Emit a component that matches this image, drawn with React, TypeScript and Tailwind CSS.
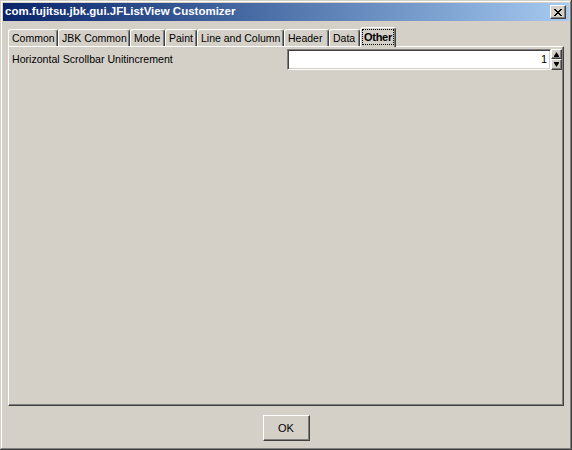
import React from "react";

const tabs: { label: string; w: string; selected?: boolean }[] = [
  { label: "Common", w: "w-[50px]" },
  { label: "JBK Common", w: "w-[72px]" },
  { label: "Mode", w: "w-[35px]" },
  { label: "Paint", w: "w-[32px]" },
  { label: "Line and Column", w: "w-[87px]" },
  { label: "Header", w: "w-[45px]" },
  { label: "Data", w: "w-[31px]" },
  { label: "Other", w: "w-[36px]", selected: true },
];

function Raised({ className = "", children }: { className?: string; children?: React.ReactNode }) {
  return (
    <div
      className={
        "bg-[#d4d0c8] border border-t-white border-l-white border-r-[#404040] border-b-[#404040] shadow-[inset_-1px_-1px_0_#808080] flex items-center justify-center " +
        className
      }
    >
      {children}
    </div>
  );
}

export default function App() {
  return (
    <div className="w-[572px] h-[450px] bg-[#d4d0c8] p-[3px] flex flex-col font-['Liberation_Sans',Arial,sans-serif] text-black shadow-[inset_-1px_-1px_0_#404040,inset_1px_1px_0_#d4d0c8,inset_-2px_-2px_0_#808080,inset_2px_2px_0_#ffffff]">
      {/* title bar */}
      <div className="h-[18px] flex items-center justify-between pl-[2px] pr-[3px] bg-linear-to-r from-[#0a246a] to-[#a6caf0]">
        <span className="text-white font-bold text-[11.5px] leading-none tracking-[0px]">
          com.fujitsu.jbk.gui.JFListView Customizer
        </span>
        <Raised className="w-[16px] h-[14px]">
          <svg width="8" height="7" viewBox="0 0 8 7">
            <path d="M0 0 L7 7 M1 0 L8 7 M7 0 L0 7 M8 0 L1 7" stroke="#000" strokeWidth="1" shapeRendering="crispEdges" />
          </svg>
        </Raised>
      </div>

      {/* tabs + panel */}
      <div className="mt-[6px] ml-[5px] w-[556px] flex flex-col">
        <div className="flex items-end h-[19px]">
          {tabs.map((t) =>
            t.selected ? (
              <div
                key={t.label}
                className={`${t.w} h-[20px] -mb-[1px] relative z-10 bg-[#d4d0c8] border-t border-l border-r border-t-white border-l-white border-r-[#404040] rounded-t-[3px] shadow-[inset_-1px_0_0_#808080] flex items-start justify-center pt-[1px]`}
              >
                <span className="border border-dotted border-black px-[1px] h-[16px] flex items-center text-[11px] font-bold leading-none tracking-[-0.3px]">
                  {t.label}
                </span>
              </div>
            ) : (
              <div
                key={t.label}
                className={`${t.w} h-[17px] bg-[#d4d0c8] border-t border-l border-r border-t-white border-l-white border-r-[#404040] rounded-t-[3px] shadow-[inset_-1px_0_0_#808080] flex items-center pl-[3px] text-[10.5px] leading-none whitespace-nowrap overflow-hidden`}
              >
                {t.label}
              </div>
            )
          )}
        </div>
        <div className="h-[360px] border border-t-white border-l-white border-r-[#404040] border-b-[#404040] shadow-[inset_-1px_-1px_0_#808080] pt-[2px] pl-[3px] pr-[1px]">
          <div className="flex items-start">
            <div className="flex-1 h-[21px] flex items-center text-[10.6px] leading-none">
              Horizontal Scrollbar Unitincrement
            </div>
            <div className="w-[264px] h-[21px] bg-white border border-t-[#808080] border-l-[#808080] border-b-white border-r-white shadow-[inset_1px_1px_0_#404040,inset_-1px_-1px_0_#d4d0c8] flex items-center justify-end pr-[3px] text-[11px] leading-none">
              1
            </div>
            <div className="w-[11px] flex flex-col">
              <Raised className="h-[10px] w-[11px]">
                <svg width="5" height="5" viewBox="0 0 5 5">
                  <path d="M2.5 0 L5 4 L0 4 Z" fill="#000" />
                  <rect x="0" y="4" width="5" height="1" fill="#000" />
                </svg>
              </Raised>
              <Raised className="h-[11px] w-[11px]">
                <svg width="5" height="5" viewBox="0 0 5 5">
                  <rect x="0" y="0" width="5" height="1" fill="#000" />
                  <path d="M0 1 L5 1 L2.5 5 Z" fill="#000" />
                </svg>
              </Raised>
            </div>
          </div>
        </div>
      </div>

      {/* OK button */}
      <div className="flex justify-center mt-[9px]">
        <Raised className="w-[47px] h-[26px] text-[11px] leading-none">OK</Raised>
      </div>
    </div>
  );
}
